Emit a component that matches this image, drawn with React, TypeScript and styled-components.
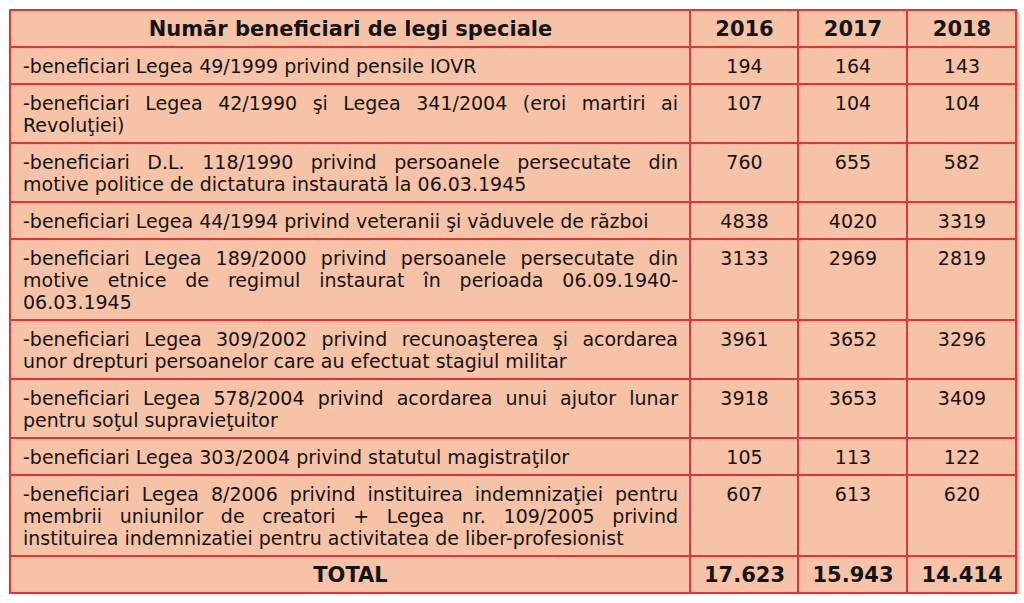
import styled, { createGlobalStyle } from 'styled-components'

const GlobalStyle = createGlobalStyle`
  html, body {
    margin: 0;
    padding: 0;
    background: #ffffff;
  }
  body {
    font-family: "DejaVu Sans", Verdana, sans-serif;
    color: #141414;
  }
`

const Page = styled.div`
  padding: 9px 0 0 9px;
`

const Table = styled.table`
  width: 1006px;
  table-layout: fixed;
  border-collapse: collapse;
  background: #f7c3a7;
  border: 2px solid #e3333b;
  box-shadow: 2px 3px 3px rgba(0, 0, 0, 0.35);
  line-height: 22px;
`

const Cell = styled.td<{ $align?: 'left' | 'center'; $bold?: boolean }>`
  border: 2px solid #e3333b;
  padding: 7px 11px 6px 12px;
  vertical-align: top;
  text-align: ${({ $align }) => ($align === 'center' ? 'center' : 'justify')};
  font-weight: ${({ $bold }) => ($bold ? 700 : 400)};
  font-size: ${({ $bold }) => ($bold ? '21px' : '19px')};
`

const rows: [string, string, string, string][] = [
  ['-beneficiari Legea 49/1999 privind pensile IOVR', '194', '164', '143'],
  ['-beneficiari Legea 42/1990 şi Legea 341/2004 (eroi martiri ai Revoluţiei)', '107', '104', '104'],
  ['-beneficiari D.L. 118/1990 privind persoanele persecutate din motive politice de dictatura instaurată la 06.03.1945', '760', '655', '582'],
  ['-beneficiari Legea 44/1994 privind veteranii şi văduvele de război', '4838', '4020', '3319'],
  ['-beneficiari Legea 189/2000 privind persoanele persecutate din motive etnice de regimul instaurat în perioada 06.09.1940-06.03.1945', '3133', '2969', '2819'],
  ['-beneficiari Legea 309/2002 privind recunoaşterea şi acordarea unor\u00a0drepturi persoanelor care au efectuat stagiul militar', '3961', '3652', '3296'],
  ['-beneficiari Legea 578/2004 privind acordarea unui ajutor lunar pentru soţul supravieţuitor', '3918', '3653', '3409'],
  ['-beneficiari Legea 303/2004 privind statutul magistraţilor', '105', '113', '122'],
  ['-beneficiari Legea 8/2006 privind instituirea indemnizaţiei pentru membrii uniunilor de creatori + Legea nr. 109/2005 privind instituirea indemnizatiei pentru activitatea de liber-profesionist', '607', '613', '620'],
]

export default function App() {
  return (
    <>
      <GlobalStyle />
      <Page>
        <Table>
          <colgroup>
            <col style={{ width: 680 }} />
            <col style={{ width: 108 }} />
            <col style={{ width: 109 }} />
            <col style={{ width: 109 }} />
          </colgroup>
          <tbody>
            <tr>
              <Cell $align="center" $bold>Număr beneficiari de legi speciale</Cell>
              <Cell $align="center" $bold>2016</Cell>
              <Cell $align="center" $bold>2017</Cell>
              <Cell $align="center" $bold>2018</Cell>
            </tr>
            {rows.map(([label, a, b, c]) => (
              <tr key={label}>
                <Cell>{label}</Cell>
                <Cell $align="center">{a}</Cell>
                <Cell $align="center">{b}</Cell>
                <Cell $align="center">{c}</Cell>
              </tr>
            ))}
            <tr>
              <Cell $align="center" $bold>TOTAL</Cell>
              <Cell $align="center" $bold>17.623</Cell>
              <Cell $align="center" $bold>15.943</Cell>
              <Cell $align="center" $bold>14.414</Cell>
            </tr>
          </tbody>
        </Table>
      </Page>
    </>
  )
}
